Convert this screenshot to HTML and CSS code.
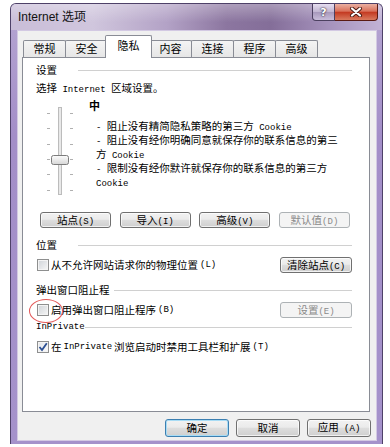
FILE: index.html
```html
<!DOCTYPE html>
<html lang="zh-CN">
<head>
    <meta charset="UTF-8">
    <meta name="viewport" content="width=device-width, initial-scale=1.0">
    <title>Internet 选项</title>
    <link rel="stylesheet" href="styles.css">
</head>
<body>
    <div class="window">
        <div class="titlebar">
            <span class="title">Internet 选项</span>
            <div class="caption">
                <span class="cap-help">?</span>
                <span class="cap-close">
                    <svg width="14" height="10" viewBox="0 0 14 10">
                        <path d="M3 1.5 L11 8.5 M11 1.5 L3 8.5" stroke="#4a1a12" stroke-width="4" stroke-linecap="round"/>
                        <path d="M3 1.5 L11 8.5 M11 1.5 L3 8.5" stroke="#fff" stroke-width="2.2" stroke-linecap="round"/>
                    </svg>
                </span>
            </div>
        </div>

        <div class="client">
            <div class="tabs">
                <span class="tab">常规</span>
                <span class="tab">安全</span>
                <span class="tab active">隐私</span>
                <span class="tab">内容</span>
                <span class="tab">连接</span>
                <span class="tab">程序</span>
                <span class="tab">高级</span>
            </div>

            <div class="panel">
                <div class="group first wide"><span class="label">设置</span></div>
                <div class="line">选择<span class="en"> Internet </span>区域设置。</div>

                <div class="level">
                    <svg class="slider" width="53" height="100" viewBox="0 0 53 100">
                        <path d="M11 15.5h3M11 30.5h3M11 46.5h3M11 61.5h3M11 76.5h3M11 92.5h3M34 15.5h3M34 30.5h3M34 46.5h3M34 61.5h3M34 76.5h3M34 92.5h3" stroke="#b0b0b0" stroke-width="1"/>
                        <rect x="22.5" y="9.5" width="3" height="87" fill="#e8e8e8" stroke="#bcbcbc"/>
                        <defs>
                            <linearGradient id="thumb" x1="0" y1="0" x2="0" y2="1">
                                <stop offset="0" stop-color="#fdfdfd"/>
                                <stop offset="1" stop-color="#d6d6d6"/>
                            </linearGradient>
                        </defs>
                        <rect x="15.5" y="57.5" width="17" height="9" rx="2" fill="url(#thumb)" stroke="#7c7c7c"/>
                    </svg>
                    <div class="level-text">
                        <div class="level-name">中</div>
                        <div class="desc">
                            <p><span class="en">- </span>阻止没有精简隐私策略的第三方<span class="en"> Cookie</span></p>
                            <p><span class="en">- </span>阻止没有经你明确同意就保存你的联系信息的第三方<span class="en"> Cookie</span></p>
                            <p><span class="en">- </span>限制没有经你默许就保存你的联系信息的第三方<span class="en"> Cookie</span></p>
                        </div>
                    </div>
                </div>

                <div class="btn-row">
                    <button class="btn">站点<span class="en">(S)</span></button>
                    <button class="btn">导入<span class="en">(I)</span></button>
                    <button class="btn">高级<span class="en">(V)</span></button>
                    <button class="btn" disabled>默认值<span class="en">(D)</span></button>
                </div>

                <div class="group wide"><span class="label">位置</span></div>
                <div class="opt-row">
                    <label class="check"><span class="box"></span>从不允许网站请求你的物理位置<span class="en"> (L)</span></label>
                    <button class="btn side">清除站点<span class="en">(C)</span></button>
                </div>

                <div class="group"><span class="label">弹出窗口阻止程</span></div>
                <div class="opt-row">
                    <label class="check"><span class="box"></span>启用弹出窗口阻止程序<span class="en">(B)</span><span class="mark"></span></label>
                    <button class="btn side" disabled>设置<span class="en">(E)</span></button>
                </div>

                <div class="group tight"><span class="label en">InPrivate</span></div>
                <div class="opt-row">
                    <label class="check">
                        <span class="box checked">
                            <svg width="10" height="10" viewBox="0 0 10 10">
                                <path d="M1.5 5 L4 8 L8.8 1.2" fill="none" stroke="#2b4f93" stroke-width="1.8"/>
                            </svg>
                        </span>在<span class="en"> InPrivate </span>浏览启动时禁用工具栏和扩展<span class="en">(T)</span>
                    </label>
                </div>
            </div>

            <div class="footer">
                <button class="btn big default">确定</button>
                <button class="btn big">取消</button>
                <button class="btn big">应用<span class="en"> (A)</span></button>
            </div>
        </div>
    </div>
</body>
</html>
```

FILE: styles.css
```css
* {
    margin: 0;
    padding: 0;
    box-sizing: border-box;
}

body {
    background: #fff;
    font-family: "Noto Sans CJK SC", sans-serif;
    font-size: 10.5px;
    color: #000;
}

.en {
    font-family: "Liberation Mono", monospace;
    font-size: 9px;
}

/* window frame */
.window {
    width: 373px;
    height: 441px;
    margin: 3px 0 0 10px;
    padding: 0 5px 2px 6px;
    border: 1px solid #4e4168;
    border-bottom: none;
    border-radius: 6px 6px 0 0;
    background: linear-gradient(180deg, #b6a6d2 0%, #a38ec8 30%, #a592cb 100%);
    display: flex;
    flex-direction: column;
}

.titlebar {
    height: 26px;
    margin: 0 -5px 0 -6px;
    border-radius: 5px 5px 0 0;
    display: flex;
    justify-content: space-between;
    align-items: flex-start;
    background:
        linear-gradient(180deg, rgba(255,255,255,0.3) 0%, rgba(255,255,255,0) 70%),
        linear-gradient(90deg, #c9bdd8 0%, #d0c6dd 22%, #b3a2c6 42%, #8c76a0 58%, #846e99 70%, #a693bd 86%, #c2b3d6 100%);
}

.title {
    font-family: "Liberation Sans", "Noto Sans CJK SC", sans-serif;
    font-size: 12px;
    line-height: 14px;
    padding: 6px 0 0 7px;
    color: #111;
}

.caption {
    display: flex;
    margin-right: 4px;
}

.cap-help {
    width: 23px;
    height: 17px;
    border: 1px solid #4c4060;
    border-top: none;
    border-radius: 0 0 0 4px;
    background: linear-gradient(180deg, #e6def0 0%, #c2b6d2 48%, #a899bc 52%, #c9bdda 100%);
    color: #fff;
    font: bold 11px "DejaVu Sans", sans-serif;
    text-shadow: 0 0 2px #2a2238, 0 0 1px #2a2238;
    display: flex;
    align-items: center;
    justify-content: center;
}

.cap-close {
    width: 43px;
    height: 17px;
    border: 1px solid #5a1a12;
    border-left: none;
    border-top: none;
    border-radius: 0 0 4px 0;
    background: linear-gradient(180deg, #eab0a2 0%, #d9705a 45%, #c43a22 52%, #d97a5e 100%);
    display: flex;
    align-items: center;
    justify-content: center;
}

/* client area */
.client {
    height: 411px;
    background: #f0f0f0;
    border: 1px solid #d3c9e3;
    padding: 4px 6px 3px 4px;
    display: flex;
    flex-direction: column;
}

.tabs {
    height: 22px;
    padding-left: 1px;
    display: flex;
    align-items: flex-end;
    font-size: 11px;
}

.tab {
    width: 43px;
    height: 17px;
    margin-left: -1px;
    border: 1px solid #898c95;
    border-bottom: none;
    border-radius: 2px 2px 0 0;
    background: linear-gradient(180deg, #f4f4f4 0%, #e6e6e6 100%);
    text-align: center;
    line-height: 15px;
}

.tab:first-child {
    margin-left: 0;
}

.tab.active {
    width: 47px;
    height: 23px;
    margin: 0 -2px -1px -3px;
    background: #fff;
    line-height: 19px;
    position: relative;
    z-index: 1;
}

.panel {
    height: 355px;
    background: #fff;
    border: 1px solid #898c95;
    padding: 5px 17px 0 13px;
}

/* group headings with etched line */
.group {
    height: 14px;
    line-height: 14px;
    margin-top: 10px;
    display: flex;
    align-items: center;
}

.group::after {
    content: "";
    flex: 1;
    height: 1px;
    margin-left: 4px;
    background: #d0d0d0;
}

.group.first {
    margin-top: 0;
}

.group.wide .label {
    min-width: 38px;
}

.group.tight {
    margin-top: 2px;
}

.group.tight::after {
    margin-left: 0;
}

.line {
    margin-top: 4px;
    line-height: 14px;
}

/* privacy level slider */
.level {
    display: flex;
    height: 100px;
    margin-top: 1px;
}

.slider {
    flex-shrink: 0;
}

.level-text {
    width: 255px;
}

.level-name {
    font-weight: bold;
    font-size: 11px;
    line-height: 14px;
}

.desc {
    margin-top: 8px;
    padding-left: 7px;
    line-height: 11px;
}

/* buttons */
.btn {
    width: 71px;
    height: 16px;
    font-family: inherit;
    font-size: 10.5px;
    line-height: 14px;
    color: #000;
    border: 1px solid #707070;
    border-radius: 3px;
    background: linear-gradient(180deg, #f2f2f2 0%, #ebebeb 45%, #dddddd 52%, #cfcfcf 100%);
    box-shadow: inset 0 0 0 1px rgba(255,255,255,0.7);
}

.btn:disabled {
    color: #8a8a8a;
    border-color: #adb2b5;
    background: #f4f4f4;
    box-shadow: none;
}

.btn.side {
    width: 72px;
}

.btn.big {
    width: 64px;
    height: 18px;
}

.btn.default {
    border-color: #3c7fb1;
    box-shadow: inset 0 0 0 1px #a8dcf5;
}

.btn-row {
    display: flex;
    justify-content: space-between;
    margin-top: 14px;
    padding: 0 2px 0 4px;
}

.opt-row {
    min-height: 16px;
    margin-top: 5px;
    padding-left: 1px;
    display: flex;
    align-items: center;
    justify-content: space-between;
}

.check {
    position: relative;
    display: flex;
    align-items: center;
    gap: 2px;
    line-height: 14px;
}

.box {
    width: 12px;
    height: 12px;
    border: 1px solid #8e8f8f;
    background: linear-gradient(135deg, #cfd3d8 0%, #f7f7f7 100%);
    box-shadow: inset 0 0 0 1px #f4f4f4;
    display: flex;
    align-items: center;
    justify-content: center;
}

.box.checked {
    background: linear-gradient(135deg, #e2e5ea 0%, #fafafa 100%);
}

/* red annotation circle */
.mark {
    position: absolute;
    left: -8px;
    top: -4px;
    width: 34px;
    height: 24px;
    border: 1.5px solid rgba(222, 60, 60, 0.85);
    border-radius: 50%;
}

.footer {
    display: flex;
    justify-content: flex-end;
    gap: 7px;
    margin: 7px -1px 0 0;
}
```
